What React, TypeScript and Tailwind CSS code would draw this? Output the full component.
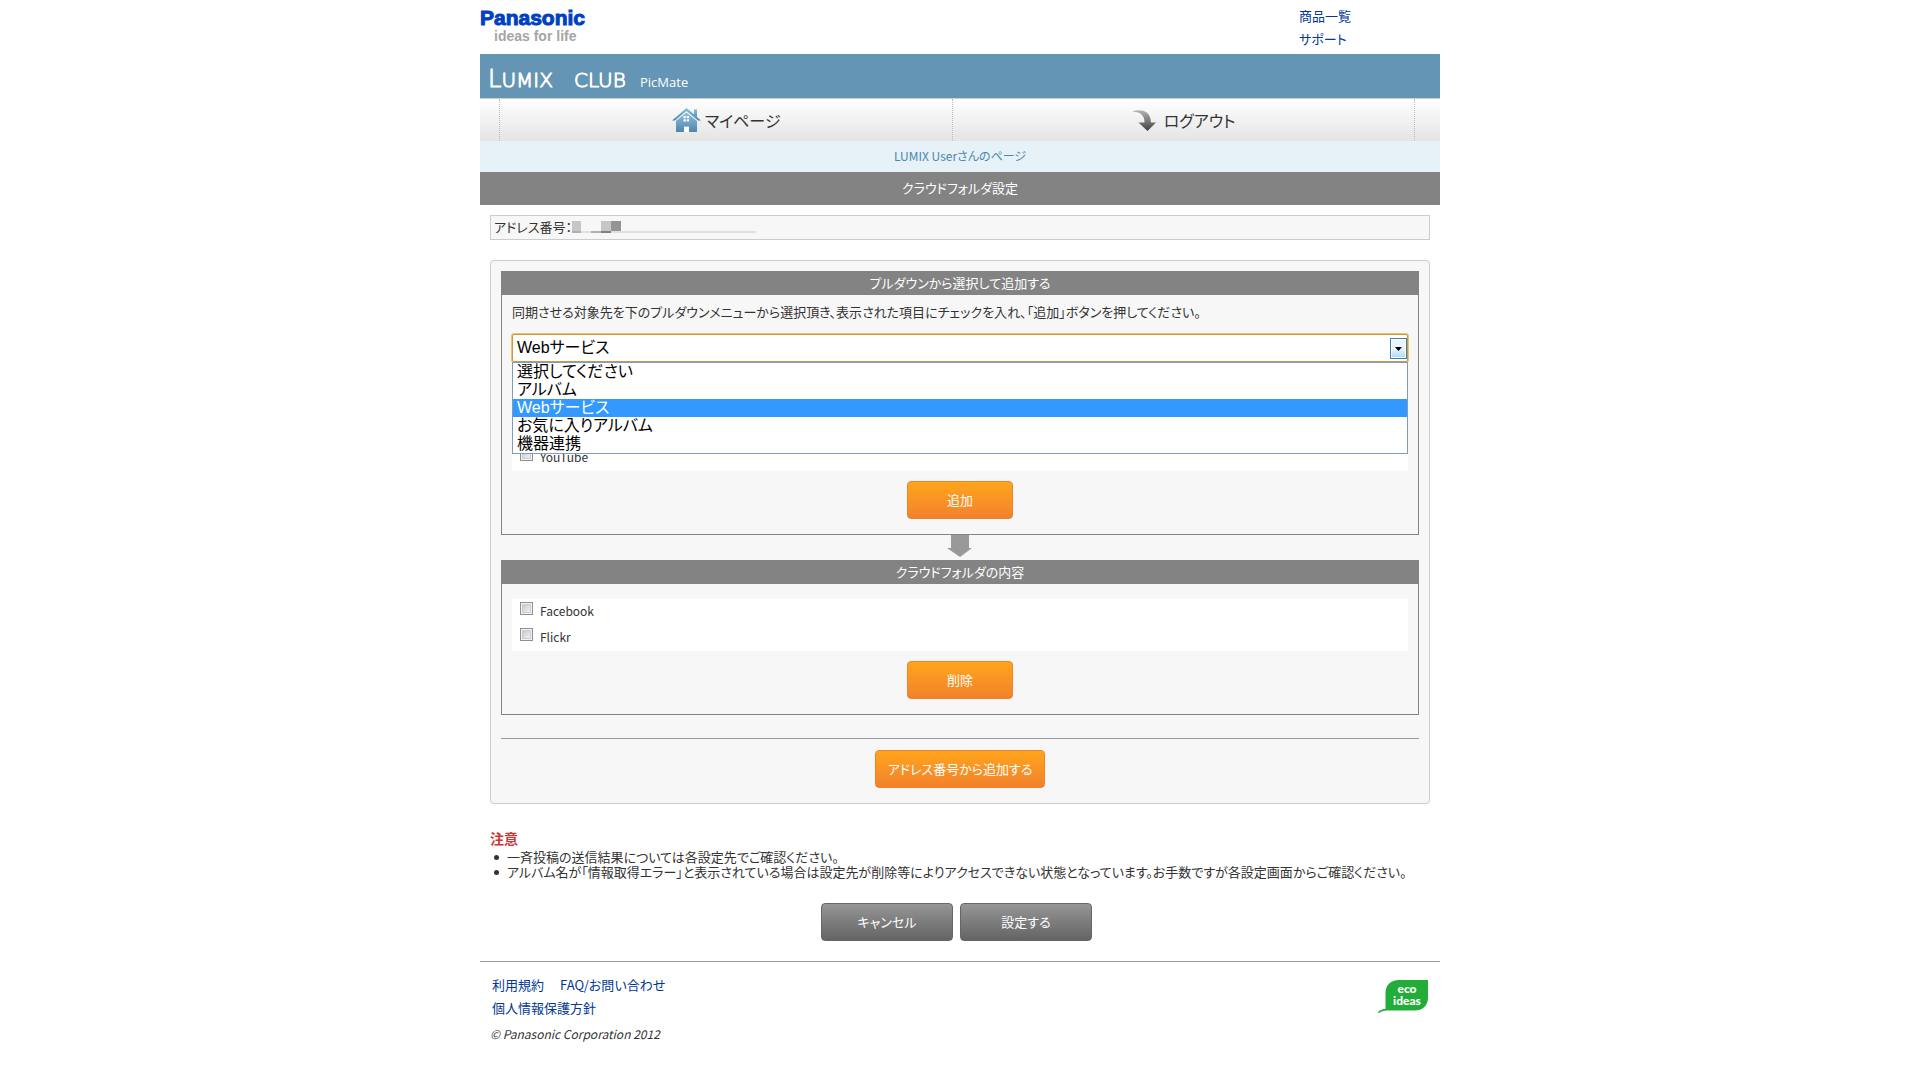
import { useState } from "react";
import type { ReactNode } from "react";

const services = ["選択してください", "アルバム", "Webサービス", "お気に入りアルバム", "機器連携"];

const notes = [
  "一斉投稿の送信結果については各設定先でご確認ください。",
  "アルバム名が「情報取得エラー」と表示されている場合は設定先が削除等によりアクセスできない状態となっています。お手数ですが各設定画面からご確認ください。",
];

function HomeIcon() {
  return (
    <svg width="29" height="24" viewBox="0 0 29 24" aria-hidden="true">
      <defs>
        <linearGradient id="home" x1="0" y1="0" x2="0" y2="1">
          <stop offset="0" stopColor="#8fbfe0" />
          <stop offset="1" stopColor="#4d87ab" />
        </linearGradient>
      </defs>
      <path fill="url(#home)" d="M14.5 0 0 12.5h3L14.5 3 26 12.5h3l-4-3.6V1.500h-3v4.800z" />
      <path fill="url(#home)" d="M14.5 4.5 4 13v11h8v-5.500h5V24h8V13z" />
      <path fill="#fff" d="M11.500 8h2.300v2.300h-2.300zM14.800 8h2.300v2.300h-2.300zM11.500 11.300h2.300v2.300h-2.300zM14.800 11.300h2.300v2.300h-2.300zM12 19h5v5h-5z" />
    </svg>
  );
}

function LogoutIcon() {
  return (
    <svg width="24" height="21" viewBox="0 0 24 21" aria-hidden="true">
      <defs>
        <linearGradient id="logout" x1="0" y1="0" x2="0" y2="1">
          <stop offset="0" stopColor="#b5b5b5" />
          <stop offset="1" stopColor="#3f3f3f" />
        </linearGradient>
      </defs>
      <path fill="url(#logout)" d="M0 1.500C8-1 18.500-.5 19 12.500h5L15.500 21 6.500 12.500h6C12.500 5 8 1.500 0 1.500z" />
    </svg>
  );
}

// Masked address number
function MaskedNumber() {
  return (
    <svg width="185" height="12" viewBox="0 0 185 12" aria-hidden="true" shapeRendering="crispEdges">
      <path fill="#e0e0e0" d="M0 10h184v2H0z" />
      <path fill="#c6c6c6" d="M0 0h9v10H0zM29 0h10v10H29z" />
      <path fill="#b0b0b0" d="M0 10h9v2H0zM19 10h10v2H19z" />
      <path fill="#808080" d="M29 10h10v2H29z" />
      <path fill="#949494" d="M39 0h10v10H39z" />
    </svg>
  );
}

function EcoLogo() {
  return (
    <svg width="50" height="34" viewBox="0 0 50 34" role="img" aria-label="eco ideas">
      <path fill="#22ac38" d="M21 0h29v18c0 8-6 12.500-13 12.500H9C5 30.500 3 31.500 0 33.500c0-3 4-4.500 7.500-4.500V13C7.500 5 13 0 21 0z" />
      <text x="29" y="13" textAnchor="middle" fill="#fff" fontSize="12" fontWeight="900" fontFamily="Lato, sans-serif">eco</text>
      <text x="29" y="25" textAnchor="middle" fill="#fff" fontSize="12" fontWeight="900" fontFamily="Lato, sans-serif">ideas</text>
    </svg>
  );
}

function OrangeButton({ children }: { children: ReactNode }) {
  return (
    <button
      type="button"
      className="mx-auto block h-[38px] min-w-[106px] rounded border border-[#f0832a] bg-linear-to-b from-[#ffa51b] to-[#f2812a] px-3 pb-0.5 text-white"
    >
      {children}
    </button>
  );
}

function GrayButton({ children }: { children: ReactNode }) {
  return (
    <button
      type="button"
      className="h-[38px] w-[132px] rounded border border-[#666] bg-linear-to-b from-[#969696] to-[#646464] pb-0.5 text-white"
    >
      {children}
    </button>
  );
}

function CheckRow({ label }: { label: string }) {
  return (
    <li>
      <label className="flex h-[26px] items-start gap-[7px] pt-[3px] pl-2">
        <input
          type="checkbox"
          className="size-[13px] appearance-none border border-[#8e8f8f] bg-linear-to-br from-[#b8bdc4] to-white shadow-[inset_0_0_0_1px_#f4f4f4,inset_0_0_0_2px_#c9ccd0]"
        />
        <span className="text-xs leading-[18px]">{label}</span>
      </label>
    </li>
  );
}

function Section({ title, children }: { title: string; children: ReactNode }) {
  return (
    <section className="border border-[#838383] pb-[15px]">
      <h2 className="bg-[#838383] pb-0.5 text-center leading-[21px] text-white">{title}</h2>
      <div className="px-2.5">{children}</div>
    </section>
  );
}

function ServiceSelect() {
  const [selected, setSelected] = useState("Webサービス");

  return (
    <div className="relative text-base text-black">
      <select
        aria-label="同期させる対象先"
        value={selected}
        onChange={(e) => setSelected(e.target.value)}
        className="block h-7 w-full appearance-none rounded-xs border border-[#c99a45] bg-white px-1 font-['Liberation_Sans','Noto_Sans_CJK_JP',sans-serif] leading-6 shadow-[0_0_0_1px_#efc36c] outline-none"
      >
        {services.map((name) => (
          <option key={name}>{name}</option>
        ))}
      </select>
      <span className="pointer-events-none absolute top-1 right-px flex h-[21px] w-[17px] items-center justify-center border border-[#3c7fb1] bg-linear-to-b from-[#eaf6fd] from-50% to-[#a7d9f5] shadow-[inset_0_0_0_1px_#fff]">
        <svg width="7" height="4" viewBox="0 0 7 4" aria-hidden="true">
          <path d="M0 0h7L3.500 4z" />
        </svg>
      </span>
      <ul className="absolute inset-x-0 top-full border border-[#7f9db9] bg-white font-['Liberation_Sans','Noto_Sans_CJK_JP',sans-serif]">
        {services.map((name) => (
          <li
            key={name}
            onClick={() => setSelected(name)}
            className={`h-[18px] px-1 leading-[18px] ${name === selected ? "bg-[#3399ff] text-white" : ""}`}
          >
            {name}
          </li>
        ))}
      </ul>
    </div>
  );
}

export default function App() {
  return (
    <div className="mx-auto w-full max-w-[960px] bg-white font-['Noto_Sans_CJK_JP',sans-serif] text-[13px] leading-[15px] text-[#333] [font-feature-settings:'palt']">
      <header>
        <div className="flex h-[54px] justify-between">
          <div className="pt-2 font-['Liberation_Sans',sans-serif] font-bold">
            <p className="text-[21px] leading-[20px] text-[#0041c0] [-webkit-text-stroke:1px_#0041c0]">Panasonic</p>
            <p className="pl-3.5 text-sm leading-[17px] text-[#a5a5a5]">ideas for life</p>
          </div>
          <ul className="w-[141px] pt-1 leading-[23px] text-[#003894]">
            <li><a href="#">商品一覧</a></li>
            <li><a href="#">サポート</a></li>
          </ul>
        </div>

        <div className="flex h-11 items-baseline gap-2 bg-[#6595b5] pt-2.5 pl-2 font-['DejaVu_Sans',sans-serif] text-xl leading-[30px] font-extralight text-white">
          <span className="w-[78px] [-webkit-text-stroke:1px_#fff]">
            <span className="text-2xl leading-[30px]">L</span>UMIX
          </span>
          <span className="w-[58px] [-webkit-text-stroke:1px_#fff]">CLUB</span>
          <span className="font-['Open_Sans',sans-serif] text-[13px] font-medium">PicMate</span>
        </div>

        <nav className="grid h-[43px] grid-cols-[49fr_50fr] border-t border-[#ccc] bg-linear-to-b from-white to-[#e4e4e4] pr-[25px] pl-[19px] text-base">
          <a href="#" className="flex items-center justify-center gap-1 border-l border-dotted border-[#bbb]">
            <HomeIcon />
            マイページ
          </a>
          <a href="#" className="flex items-center justify-center gap-2 border-x border-dotted border-[#bbb]">
            <LogoutIcon />
            ログアウト
          </a>
        </nav>
        <p className="bg-[#e6f1f8] pb-0.5 text-center text-xs leading-[29px] text-[#4d87ab]">LUMIX Userさんのページ</p>
        <h1 className="bg-[#838383] pb-0.5 text-center leading-[31px] text-white">クラウドフォルダ設定</h1>
      </header>

      <main className="px-2.5 pt-2.5">
        <p className="flex h-[25px] items-center border border-[#ccc] bg-[#f7f7f7] px-[3px] pb-0.5">
          アドレス番号：
          <MaskedNumber />
        </p>

        <div className="mt-5 rounded border border-[#ccc] bg-[#f7f7f7] p-2.5 pb-[15px]">
          <Section title="プルダウンから選択して追加する">
            <p className="pt-[9px] pb-[15px]">
              同期させる対象先を下のプルダウンメニューから選択頂き、表示された項目にチェックを入れ、「追加」ボタンを押してください。
            </p>
            <ServiceSelect />
            <ul className="mt-2 mb-2.5 bg-white pt-[75px]">
              <CheckRow label="YouTube" />
            </ul>
            <OrangeButton>追加</OrangeButton>
          </Section>

          <svg width="26" height="25" viewBox="0 0 26 25" className="mx-auto block" aria-hidden="true">
            <path fill="#999" d="M4 0h18v13h3L13 22 0 13h4z" />
          </svg>

          <Section title="クラウドフォルダの内容">
            <ul className="mt-[15px] mb-2.5 bg-white">
              <CheckRow label="Facebook" />
              <CheckRow label="Flickr" />
            </ul>
            <OrangeButton>削除</OrangeButton>
          </Section>

          <hr className="mt-[23px] mb-[11px] border-[#999]" />
          <OrangeButton>アドレス番号から追加する</OrangeButton>
        </div>

        <h3 className="mt-[25px] text-sm leading-[18px] font-bold text-[#c33]">注意</h3>
        <ul className="mt-0.5 pl-1">
          {notes.map((note) => (
            <li
              key={note}
              className="flex gap-2 before:mt-1.5 before:size-[5px] before:shrink-0 before:rounded-full before:bg-[#333]"
            >
              {note}
            </li>
          ))}
        </ul>

        <div className="mt-6 mr-[7px] flex justify-center gap-[7px]">
          <GrayButton>キャンセル</GrayButton>
          <GrayButton>設定する</GrayButton>
        </div>
      </main>

      <footer className="mt-5 flex justify-between border-t border-[#999] px-2.5 pt-[11px]">
        <div>
          <ul className="flex max-w-[200px] flex-wrap gap-x-4 pl-0.5 leading-[23px] text-[#003894]">
            <li><a href="#">利用規約</a></li>
            <li><a href="#">FAQ/お問い合わせ</a></li>
            <li><a href="#">個人情報保護方針</a></li>
          </ul>
          <p className="mt-1.5 text-xs leading-[18px] italic">© Panasonic Corporation 2012</p>
        </div>
        <div className="pt-[7px] pr-0.5">
          <EcoLogo />
        </div>
      </footer>
    </div>
  );
}
